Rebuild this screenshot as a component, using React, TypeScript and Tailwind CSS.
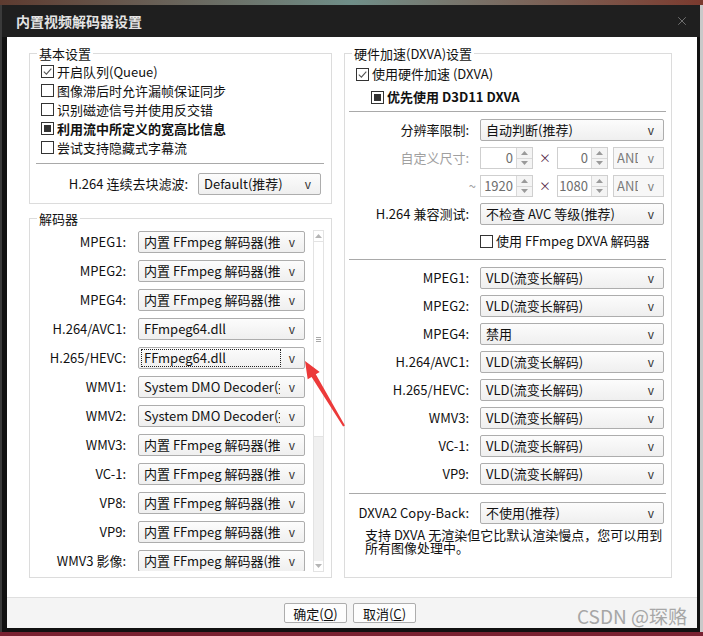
import { X } from 'lucide-react';

type CheckState = 'on' | 'off' | 'mixed';

function Box({ state }: { state: CheckState }) {
  return (
    <span className="flex h-[13px] w-[13px] shrink-0 items-center justify-center border border-[#333] bg-white">
      {state === 'on' && (
        <svg width="9" height="9" viewBox="0 0 9 9">
          <path d="M0.8 4.6 L3.4 7.1 L8.3 1.6" fill="none" stroke="#555" strokeWidth="1.1" />
        </svg>
      )}
      {state === 'mixed' && <span className="h-[7px] w-[7px] bg-[#333]" />}
    </span>
  );
}

function Check({ state, bold, children, className = '' }: { state: CheckState; bold?: boolean; children: React.ReactNode; className?: string }) {
  return (
    <div className={`flex items-center gap-[3px] ${className}`}>
      <Box state={state} />
      <span className={`whitespace-nowrap ${bold ? 'font-bold' : ''}`}>{children}</span>
    </div>
  );
}

function Combo({ value, focus, className = '' }: { value: string; focus?: boolean; className?: string }) {
  return (
    <div className={`flex h-[22px] items-center rounded-[2px] border border-[#adadad] bg-gradient-to-b from-[#fcfcfc] to-[#efefef] pl-[2px] pr-[9px] ${className}`}>
      <span
        className={`flex h-[18px] min-w-0 flex-1 items-center overflow-hidden whitespace-nowrap px-[2px] ${
          focus ? 'border border-dotted border-[#222]' : 'border border-transparent'
        }`}
      >
        {value}
      </span>
      <span className="ml-[8px] text-[12px] text-[#333]">v</span>
    </div>
  );
}

function Spin({ value, className = '' }: { value: string; className?: string }) {
  return (
    <div className={`flex h-[22px] border border-[#cfcfcf] bg-white ${className}`}>
      <span className="flex flex-1 items-center justify-end pr-[3px] text-[#6d6d6d]">{value}</span>
      <div className="flex w-[16px] flex-col border-l border-[#d9d9d9]">
        <span className="flex flex-1 items-center justify-center border-b border-[#d9d9d9] bg-[#f4f4f4]">
          <svg width="7" height="4" viewBox="0 0 7 4"><path d="M0 4 L3.5 0 L7 4 Z" fill="#9a9a9a" /></svg>
        </span>
        <span className="flex flex-1 items-center justify-center bg-[#f4f4f4]">
          <svg width="7" height="4" viewBox="0 0 7 4"><path d="M0 0 L3.5 4 L7 0 Z" fill="#9a9a9a" /></svg>
        </span>
      </div>
    </div>
  );
}

function AndCombo() {
  return (
    <div className="flex h-[22px] w-[51px] items-center border border-[#cfcfcf] bg-[#f7f7f7] pl-[3px] pr-[9px] text-[#7a7a7a]">
      <span className="w-[21px] overflow-hidden whitespace-nowrap">AND</span>
      <span className="ml-auto text-[12px]">v</span>
    </div>
  );
}

function Group({ title, className = '', children }: { title: string; className?: string; children: React.ReactNode }) {
  return (
    <div className={`flex flex-col border border-[#dcdcdc] ${className}`}>
      <div className="-mt-[9px] ml-[7px] w-fit bg-white px-[2px] leading-[17px]">{title}</div>
      {children}
    </div>
  );
}

const leftDecoders: [string, string, boolean?][] = [
  ['MPEG1:', '内置 FFmpeg 解码器(推荐)'],
  ['MPEG2:', '内置 FFmpeg 解码器(推荐)'],
  ['MPEG4:', '内置 FFmpeg 解码器(推荐)'],
  ['H.264/AVC1:', 'FFmpeg64.dll'],
  ['H.265/HEVC:', 'FFmpeg64.dll', true],
  ['WMV1:', 'System DMO Decoder(推荐)'],
  ['WMV2:', 'System DMO Decoder(推荐)'],
  ['WMV3:', '内置 FFmpeg 解码器(推荐)'],
  ['VC-1:', '内置 FFmpeg 解码器(推荐)'],
  ['VP8:', '内置 FFmpeg 解码器(推荐)'],
  ['VP9:', '内置 FFmpeg 解码器(推荐)'],
  ['WMV3 影像:', '内置 FFmpeg 解码器(推荐)'],
];

const dxvaRows: [string, string][] = [
  ['MPEG1:', 'VLD(流变长解码)'],
  ['MPEG2:', 'VLD(流变长解码)'],
  ['MPEG4:', '禁用'],
  ['H.264/AVC1:', 'VLD(流变长解码)'],
  ['H.265/HEVC:', 'VLD(流变长解码)'],
  ['WMV3:', 'VLD(流变长解码)'],
  ['VC-1:', 'VLD(流变长解码)'],
  ['VP9:', 'VLD(流变长解码)'],
];

function RightRow({ label, children, className = '', muted }: { label: React.ReactNode; children: React.ReactNode; className?: string; muted?: boolean }) {
  return (
    <div className={`flex h-[22px] items-center ${className}`}>
      <div className={`w-[124px] whitespace-nowrap text-right ${muted ? 'text-[#a0a0a0]' : ''}`}>{label}</div>
      <div className="ml-[11px] mr-[7px] flex flex-1 items-center">{children}</div>
    </div>
  );
}

function Scrollbar() {
  return (
    <div className="ml-[8px] mt-[1px] flex h-[342px] w-[11px] flex-col border border-[#e3e3e3] bg-[#f0f0f0]">
      <div className="flex h-[10px] items-center justify-center bg-white">
        <svg width="7" height="4" viewBox="0 0 7 4"><path d="M0 4 L3.5 0 L7 4 Z" fill="#b5b5b5" /></svg>
      </div>
      <div className="flex h-[196px] items-center justify-center border-y border-[#e3e3e3] bg-white">
        <svg width="5" height="5" viewBox="0 0 5 5">
          <path d="M0 0.5 H5 M0 2.5 H5 M0 4.5 H5" stroke="#a8a8a8" strokeWidth="1" />
        </svg>
      </div>
      <div className="flex-1" />
      <div className="flex h-[10px] items-center justify-center bg-white">
        <svg width="7" height="4" viewBox="0 0 7 4"><path d="M0 0 L3.5 4 L7 0 Z" fill="#b5b5b5" /></svg>
      </div>
    </div>
  );
}

export default function App() {
  return (
    <div className="relative flex h-[636px] w-[703px] flex-col overflow-hidden bg-[#7a2232] font-['Noto_Sans_CJK_SC','Noto_Sans',sans-serif] text-[13px] text-[#111]">
      <div className="h-[5px] bg-gradient-to-r from-[#5d3b30] via-[#6f8e88] to-[#7a3a2e]" />
      <div className="flex h-[627px]">
        <div className="w-[2px] bg-[#3a3a3a]" />
        <div className="flex w-[698px] flex-col bg-[#111]">
          {/* title bar */}
          <div className="flex h-[32px] items-center justify-between bg-[#1f1f1f] pl-[14px] pr-[11px]">
            <span className="text-[14px] font-bold text-[#e4e4e4]">内置视频解码器设置</span>
            <X className="h-[14px] w-[14px] text-[#8a8a8a]" strokeWidth={1.3} />
          </div>

          <div className="flex pb-[4px] pl-[5px] pr-[3px]">
            <div className="flex h-[591px] w-[690px] flex-col bg-white">
              <div className="flex h-[560px] gap-[12px] pb-[19px] pl-[22px] pr-[25px] pt-[16px]">
                {/* left column */}
                <div className="flex w-[303px] flex-col">
                  <Group title="基本设置">
                    <div className="flex flex-col pl-[11px]">
                      <Check state="on" className="h-[19px]">开启队列(Queue)</Check>
                      <Check state="off" className="h-[19px]">图像滞后时允许漏帧保证同步</Check>
                      <Check state="off" className="h-[19px]">识别磁迹信号并使用反交错</Check>
                      <Check state="mixed" bold className="h-[19px]">利用流中所定义的宽高比信息</Check>
                      <Check state="off" className="h-[19px]">尝试支持隐藏式字幕流</Check>
                    </div>
                    <div className="ml-[6px] mr-[7px] mt-[6px] h-px bg-[#a9a9a9]" />
                    <div className="mb-[8px] mt-[9px] flex items-center">
                      <div className="w-[158px] whitespace-nowrap text-right">H.264 连续去块滤波:</div>
                      <Combo value="Default(推荐)" className="ml-[10px] w-[123px]" />
                    </div>
                  </Group>

                  <Group title="解码器" className="mt-[14px] flex-1">
                    <div className="mt-[2px] flex items-start">
                      <div className="flex h-[342px] w-[275px] flex-col gap-[7px] overflow-hidden pt-[2px]">
                        {leftDecoders.map(([label, value, focus]) => (
                          <div key={label} className="flex h-[22px] shrink-0 items-center">
                            <div className="w-[96px] whitespace-nowrap text-right">{label}</div>
                            <Combo value={value} focus={focus} className="ml-[12px] w-[167px]" />
                          </div>
                        ))}
                      </div>
                      <Scrollbar />
                    </div>
                  </Group>
                </div>

                {/* right column */}
                <Group title="硬件加速(DXVA)设置" className="flex-1">
                  <Check state="on" className="ml-[11px] mt-[2px] h-[20px]">使用硬件加速 (DXVA)</Check>
                  <Check state="mixed" bold className="ml-[26px] mt-[3px] h-[20px]">优先使用 D3D11 DXVA</Check>
                  <div className="ml-[4px] mr-[5px] mt-[4px] h-px bg-[#a9a9a9]" />

                  <RightRow label="分辨率限制:" className="mt-[7px]">
                    <Combo value="自动判断(推荐)" className="w-full" />
                  </RightRow>
                  <RightRow label="自定义尺寸:" muted className="mt-[6px]">
                    <Spin value="0" className="w-[53px]" />
                    <span className="w-[24px] text-center text-[12px] text-[#5a2a4a]">×</span>
                    <Spin value="0" className="w-[51px]" />
                    <div className="ml-[5px]"><AndCombo /></div>
                  </RightRow>
                  <RightRow label={<span className="-mr-[7px] text-[#a0a0a0]">~</span>} className="mt-[6px]">
                    <Spin value="1920" className="w-[53px]" />
                    <span className="w-[24px] text-center text-[12px] text-[#5a2a4a]">×</span>
                    <Spin value="1080" className="w-[51px]" />
                    <div className="ml-[5px]"><AndCombo /></div>
                  </RightRow>
                  <RightRow label="H.264 兼容测试:" className="mt-[6px]">
                    <Combo value="不检查 AVC 等级(推荐)" className="w-full" />
                  </RightRow>
                  <Check state="off" className="ml-[135px] mt-[6px] h-[20px]">使用 FFmpeg DXVA 解码器</Check>
                  <div className="ml-[4px] mr-[5px] mt-[8px] h-px bg-[#a9a9a9]" />

                  <div className="mt-[7px] flex flex-col gap-[6px]">
                    {dxvaRows.map(([label, value]) => (
                      <RightRow key={label} label={label}>
                        <Combo value={value} className="w-full" />
                      </RightRow>
                    ))}
                  </div>
                  <div className="ml-[4px] mr-[5px] mt-[8px] h-px bg-[#a9a9a9]" />
                  <RightRow label="DXVA2 Copy-Back:" className="mt-[8px]">
                    <Combo value="不使用(推荐)" className="w-full" />
                  </RightRow>
                  <p className="mt-[4px] pl-[20px] leading-[13px]">
                    <span className="whitespace-nowrap">支持 DXVA 无渲染但它比默认渲染慢点，您可以用到</span>
                    <br />
                    <span className="whitespace-nowrap">所有图像处理中。</span>
                  </p>
                </Group>
              </div>

              {/* footer */}
              <div className="flex h-[31px] gap-[6px] border-t border-[#dfdfdf] bg-[#f4f4f4] pl-[277px] pt-[5px]">
                <button className="h-[20px] w-[63px] rounded-[2px] border border-[#adadad] bg-[#fdfdfd] leading-none">
                  确定(<span className="underline">O</span>)
                </button>
                <button className="h-[20px] w-[63px] rounded-[2px] border border-[#adadad] bg-[#fdfdfd] leading-none">
                  取消(<span className="underline">C</span>)
                </button>
              </div>
            </div>
          </div>
        </div>
        <div className="flex-1 bg-[#c9c9c9]" />
      </div>
      <div className="flex-1 bg-[#7a2232]" />

      {/* watermark */}
      <span className="pointer-events-none absolute left-[577px] top-[604px] text-[19px] leading-[24px] text-[#a6a6a6]">
        CSDN @琛赂
      </span>

      {/* red annotation arrow */}
      <svg className="pointer-events-none absolute left-0 top-0" width="703" height="636" viewBox="0 0 703 636">
        <polygon
          points="305,361 319.7,372 315.8,374.3 344.9,425.5 343.1,426.5 311.6,376.9 307.7,379.2"
          fill="#ec3a3a"
        />
      </svg>
    </div>
  );
}
